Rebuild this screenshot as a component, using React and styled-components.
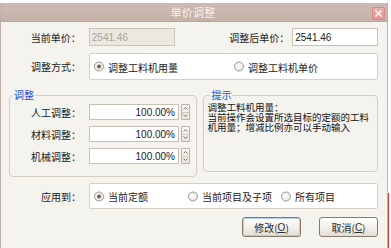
import React from "react";
import styled, { createGlobalStyle } from "styled-components";

const cjk = `"Noto Sans CJK SC", "Noto Sans", sans-serif`;
const latin = `"Liberation Sans", "Noto Sans CJK SC", sans-serif`;

const GlobalStyle = createGlobalStyle`
  html, body { margin: 0; padding: 0; background: #ffffff; }
  body { font-family: ${cjk}; font-size: 10px; color: #1a1a1a; }
  * { box-sizing: border-box; }
`;

const Page = styled.div`
  display: flex;
  width: 391px;
  height: 248px;
  padding-top: 3px;
  overflow: hidden;
`;

const Window = styled.div`
  width: 388px;
  height: 248px;
  display: flex;
  flex-direction: column;
  background: #f5f3ee;
  border-left: 1px solid #c2b2aa;
  border-right: 1px solid #c2b2aa;
`;

const Desktop = styled.div`
  flex: 1;
  margin-top: 190px;
  border-left: 1px solid #e23030;
  background: #ffffff;
`;

const TitleBar = styled.div`
  height: 19px;
  display: grid;
  grid-template-columns: 1fr auto 1fr;
  align-items: end;
  padding: 0 2px 1px 0;
  background: linear-gradient(#cdbab2, #c6b1a9);
  border-bottom: 1px solid #b9a69e;
`;

const Title = styled.div`
  grid-column: 2;
  align-self: center;
  font-size: 11px;
  color: #f6efeb;
  letter-spacing: 0.3px;
`;

const Close = styled.div`
  grid-column: 3;
  justify-self: end;
  width: 13px;
  height: 13px;
  display: flex;
  align-items: center;
  justify-content: center;
  border: 1px solid #d08a8a;
  border-radius: 2px;
  background: linear-gradient(#eeb0ae, #e4948f);
`;

const Body = styled.div`
  display: flex;
  flex-direction: column;
  padding: 6px 9px 0 8px;
`;

const Row = styled.div`
  display: flex;
  align-items: center;
  height: ${({ h }) => h || 18}px;
  margin-top: ${({ mt }) => mt || 0}px;
`;

const Label = styled.div`
  width: ${({ w }) => w || 72}px;
  margin-right: ${({ gap }) => (gap === undefined ? 8 : gap)}px;
  text-align: right;
  white-space: nowrap;
`;

const TextInput = styled.div`
  width: ${({ w }) => w}px;
  height: ${({ h }) => h || 18}px;
  display: flex;
  align-items: center;
  justify-content: ${({ right }) => (right ? "flex-end" : "flex-start")};
  padding: 0 3px 0 2px;
  font-family: ${latin};
  font-size: 10px;
  background: ${({ disabled }) => (disabled ? "#ebe8df" : "#ffffff")};
  color: ${({ disabled }) => (disabled ? "#a8a49a" : "#1a1a1a")};
  border: 1px solid ${({ disabled }) => (disabled ? "#cbc6b9" : "#c9c2b4")};
`;

const RadioBox = styled.div`
  flex: 1;
  height: 100%;
  position: relative;
  background: #ffffff;
  border: 1px solid #d6d1c5;
  border-radius: 2px;
`;

const RadioItem = styled.div`
  position: absolute;
  left: ${({ x }) => x}px;
  top: 50%;
  transform: translateY(-50%);
  display: flex;
  align-items: center;
  gap: 4px;
  white-space: nowrap;
`;

const Dot = styled.span`
  width: 10px;
  height: 10px;
  border-radius: 50%;
  border: 1px solid #9d958c;
  background: radial-gradient(circle at 40% 40%, #ffffff, #e4e0d8);
  display: flex;
  align-items: center;
  justify-content: center;
  &::after {
    content: "";
    width: 4px;
    height: 4px;
    border-radius: 50%;
    background: ${({ on }) => (on ? "#6d6259" : "transparent")};
  }
`;

const Groups = styled.div`
  display: flex;
  align-items: flex-start;
  gap: 6px;
  margin-top: 9px;
`;

const Group = styled.fieldset`
  margin: 0;
  width: ${({ w }) => w}px;
  height: ${({ h }) => h}px;
  padding: ${({ pad }) => pad};
  border: 1px solid #d3cec2;
  border-radius: 4px;
  min-width: 0;
`;

const Legend = styled.legend`
  padding: 0 1px;
  margin-left: 3px;
  font-size: 10px;
  line-height: 12px;
  color: #1c4fcf;
`;

const FieldRows = styled.div`
  display: flex;
  flex-direction: column;
  gap: 6px;
`;

const FieldRow = styled.div`
  display: flex;
  align-items: center;
  height: 16px;
`;

const Spinner = styled.div`
  width: 9px;
  height: 16px;
  margin-left: 2px;
  display: flex;
  flex-direction: column;
  border: 1px solid #b8b0a4;
  border-radius: 1px;
  background: linear-gradient(#fbfaf7, #e9e5dc);
`;

const SpinHalf = styled.div`
  flex: 1;
  display: flex;
  align-items: center;
  justify-content: center;
  & + & { border-top: 1px solid #cfc9bd; }
`;

const Hint = styled.div`
  font-size: 9.5px;
  line-height: 10px;
  white-space: nowrap;
  color: #111;
`;

const Buttons = styled.div`
  display: flex;
  justify-content: flex-end;
  gap: 18px;
  margin-top: 8px;
`;

const Button = styled.div`
  width: ${({ w }) => w || 59}px;
  height: 20px;
  display: flex;
  align-items: center;
  justify-content: center;
  border: 1px solid #857a6c;
  border-radius: 3px;
  background: linear-gradient(#ffffff, #f1eee7 60%, #e2ddd2);
  box-shadow: ${({ primary }) => (primary ? "inset 0 0 0 1px #b4cdee" : "none")};
  color: #2a2a2a;
  font-size: 10px;
  & u { font-family: ${latin}; }
`;

const Chevron = ({ up }) => (
  <svg width="5" height="3" viewBox="0 0 5 3">
    <path d={up ? "M0.5 2.5 L2.5 0.5 L4.5 2.5" : "M0.5 0.5 L2.5 2.5 L4.5 0.5"} stroke="#6b6459" strokeWidth="0.9" fill="none" />
  </svg>
);

const Spin = () => (
  <Spinner>
    <SpinHalf><Chevron up /></SpinHalf>
    <SpinHalf><Chevron /></SpinHalf>
  </Spinner>
);

const Radio = ({ x, on, children }) => (
  <RadioItem x={x}>
    <Dot on={on} />
    {children}
  </RadioItem>
);

const rates = ["人工调整：", "材料调整：", "机械调整："];

export default function App() {
  return (
    <Page>
      <GlobalStyle />
      <Window>
        <TitleBar>
          <Title>单价调整</Title>
          <Close>
            <svg width="9" height="9" viewBox="0 0 9 9">
              <path d="M1.5 1.5 L7.5 7.5 M7.5 1.5 L1.5 7.5" stroke="#ffffff" strokeWidth="1.4" />
            </svg>
          </Close>
        </TitleBar>
        <Body>
          <Row>
            <Label>当前单价：</Label>
            <TextInput w={86} disabled>2541.46</TextInput>
            <Label w={115} gap={3}>调整后单价：</Label>
            <TextInput w={86}>2541.46</TextInput>
          </Row>
          <Row h={27} mt={7}>
            <Label>调整方式：</Label>
            <RadioBox>
              <Radio x={4} on>调整工料机用量</Radio>
              <Radio x={144}>调整工料机单价</Radio>
            </RadioBox>
          </Row>
          <Groups>
            <Group w={189} h={88} pad="3px 0 0 0">
              <Legend>调整</Legend>
              <FieldRows>
                {rates.map((r) => (
                  <FieldRow key={r}>
                    <Label w={71}>{r}</Label>
                    <TextInput w={90} h={16} right>100.00%</TextInput>
                    <Spin />
                  </FieldRow>
                ))}
              </FieldRows>
            </Group>
            <Group w={175} h={83} pad="1px 3px 0 3px">
              <Legend>提示</Legend>
              <Hint>
                调整工料机用量：<br />
                当前操作会设置所选目标的定额的工料<br />
                机用量；增减比例亦可以手动输入
              </Hint>
            </Group>
          </Groups>
          <Row h={26} mt={6}>
            <Label>应用到：</Label>
            <RadioBox>
              <Radio x={4} on>当前定额</Radio>
              <Radio x={98}>当前项目及子项</Radio>
              <Radio x={191}>所有项目</Radio>
            </RadioBox>
          </Row>
          <Buttons>
            <Button primary>修改(<u>O</u>)</Button>
            <Button>取消(<u>C</u>)</Button>
          </Buttons>
        </Body>
      </Window>
      <Desktop />
    </Page>
  );
}
